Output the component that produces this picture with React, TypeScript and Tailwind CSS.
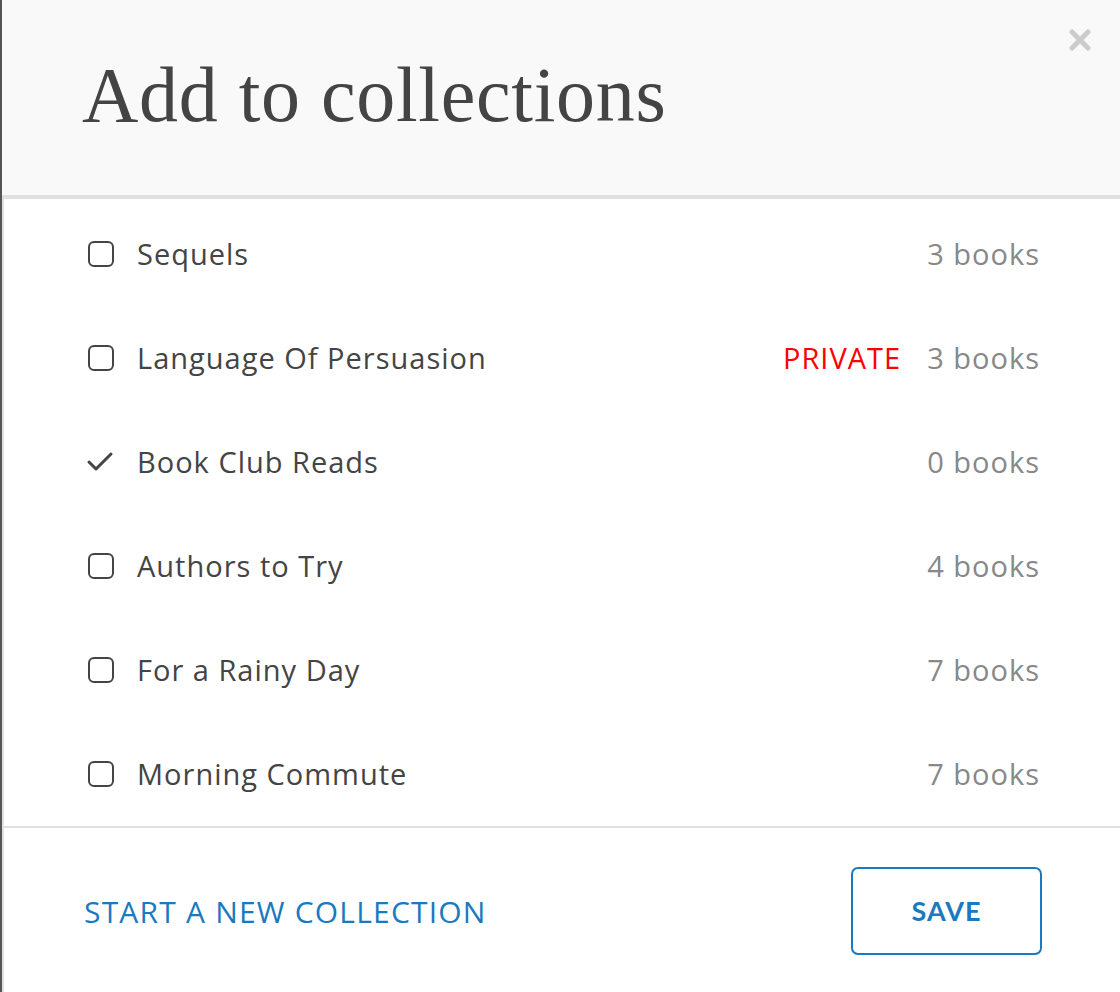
const rows = [
  { name: 'Sequels', count: '3 books', checked: false, priv: false },
  { name: 'Language Of Persuasion', count: '3 books', checked: false, priv: true },
  { name: 'Book Club Reads', count: '0 books', checked: true, priv: false },
  { name: 'Authors to Try', count: '4 books', checked: false, priv: false },
  { name: 'For a Rainy Day', count: '7 books', checked: false, priv: false },
  { name: 'Morning Commute', count: '7 books', checked: false, priv: false },
]

function Box({ checked }: { checked: boolean }) {
  if (checked) {
    return (
      <svg width="30" height="26" viewBox="0 0 30 26" className="-ml-[3px] mr-[-1px]">
        <path d="M4 13 L11 20 L26 5" fill="none" stroke="#444" strokeWidth="3" strokeLinecap="round" strokeLinejoin="round" />
      </svg>
    )
  }
  return <div className="w-[26px] h-[26px] rounded-[6px] border-[2.5px] border-[#444]" />
}

export default function App() {
  return (
    <div className="w-[1120px] h-[992px] bg-[#555] pl-[2px] font-['Open_Sans',sans-serif]">
      <div className="h-full bg-white flex flex-col relative">
        {/* Header */}
        <div className="h-[199px] bg-[#f9f9f9] border-b-[4px] border-[#e0e0e0] pl-[80px] pt-[56px] shrink-0">
          <h1 className="font-['Liberation_Serif',serif] text-[78px] leading-none text-[#444] tracking-[0.7px]">
            Add to collections
          </h1>
        </div>
        <button className="absolute right-[28px] top-[28px] w-[24px] h-[24px]">
          <svg width="24" height="24" viewBox="0 0 24 24">
            <path d="M4 4 L20 20 M20 4 L4 20" stroke="#ccc" strokeWidth="5" strokeLinecap="round" />
          </svg>
        </button>

        {/* List */}
        <div className="border-l-[2px] border-[#e0e0e0] flex-1 flex flex-col">
          <div className="pt-[3px] border-b-[2px] border-[#e0e0e0]">
            {rows.map((r) => (
              <div key={r.name} className="h-[104px] flex items-center pl-[84px] pr-[80px]">
                <Box checked={r.checked} />
                <span className="ml-[23px] text-[29px] text-[#444] tracking-[1px]">{r.name}</span>
                <span className="flex-1" />
                {r.priv && <span className="text-[29px] text-[#ff0000] tracking-[1px] mr-[26px]">PRIVATE</span>}
                <span className="text-[29px] text-[#888] tracking-[1px]">{r.count}</span>
              </div>
            ))}
          </div>

          {/* Footer */}
          <div className="flex-1 flex items-center justify-between pl-[80px] pr-[78px] pt-[2px]">
            <a className="text-[30px] text-[#1a7abf] tracking-[1.2px]">START A NEW COLLECTION</a>
            <button className="w-[191px] h-[88px] rounded-[7px] border-[2px] border-[#1a7abf] text-[#1a7abf] font-['Lato',sans-serif] font-bold text-[27px] tracking-[1px]">
              SAVE
            </button>
          </div>
        </div>
      </div>
    </div>
  )
}
